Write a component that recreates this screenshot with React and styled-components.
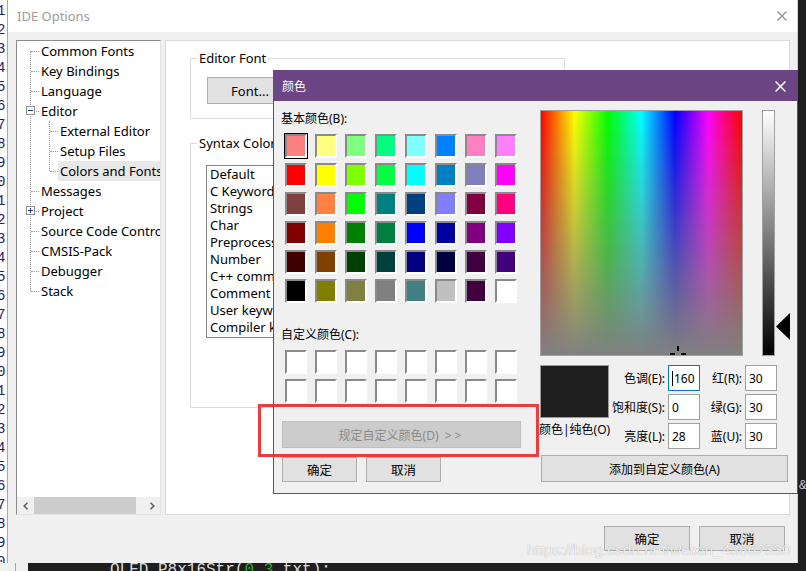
import React from "react";
import styled, { createGlobalStyle } from "styled-components";

const UI_FONT = `"Noto Sans", "Noto Sans CJK SC", sans-serif`;
const MONO = `"Liberation Mono", monospace`;
const PURPLE = "#6b4584";

const BASIC_COLORS = [
  "#ff8080", "#ffff80", "#80ff80", "#00ff80", "#80ffff", "#0080ff", "#ff80c0", "#ff80ff",
  "#ff0000", "#ffff00", "#80ff00", "#00ff40", "#00ffff", "#0080c0", "#8080c0", "#ff00ff",
  "#804040", "#ff8040", "#00ff00", "#008080", "#004080", "#8080ff", "#800040", "#ff0080",
  "#800000", "#ff8000", "#008000", "#008040", "#0000ff", "#0000a0", "#800080", "#8000ff",
  "#400000", "#804000", "#004000", "#004040", "#000080", "#000040", "#400040", "#400080",
  "#000000", "#808000", "#808040", "#808080", "#408080", "#c0c0c0", "#400040", "#ffffff",
];

const TREE = [
  { label: "Common Fonts" },
  { label: "Key Bindings" },
  { label: "Language" },
  {
    label: "Editor",
    expander: "open",
    children: [
      { label: "External Editor" },
      { label: "Setup Files" },
      { label: "Colors and Fonts", selected: true },
    ],
  },
  { label: "Messages" },
  { label: "Project", expander: "closed" },
  { label: "Source Code Control" },
  { label: "CMSIS-Pack" },
  { label: "Debugger" },
  { label: "Stack" },
];

const SYNTAX_ITEMS = [
  "Default",
  "C Keyword",
  "Strings",
  "Char",
  "Preprocessor",
  "Number",
  "C++ comment",
  "Comment",
  "User keyword",
  "Compiler keyword",
];

// current colour in the picker (HSL 0..240 scale like Windows)
const PICK = { hue: 160, sat: 0, lum: 28, r: 30, g: 30, b: 30 };

const GlobalStyle = createGlobalStyle`
  *, *::before, *::after { box-sizing: border-box; }
  html, body { margin: 0; padding: 0; background: #1e1e1e; }
  body { font-family: ${UI_FONT}; }
`;

function CloseGlyph({ size, color, weight }) {
  return (
    <svg width={size} height={size} viewBox="0 0 10 10">
      <path d="M0.5 0.5 L9.5 9.5 M9.5 0.5 L0.5 9.5" stroke={color} strokeWidth={weight} fill="none" />
    </svg>
  );
}

function Chevron({ dir }) {
  const d = dir === "left" ? "M4.5 0.8 L1.2 4 L4.5 7.2" : "M1.5 0.8 L4.8 4 L1.5 7.2";
  return (
    <svg width="6" height="8" viewBox="0 0 6 8">
      <path d={d} stroke="#606060" strokeWidth="1.6" fill="none" />
    </svg>
  );
}

function TreeNode({ node, level = 0 }) {
  return (
    <>
      <Row $level={level}>
        {node.expander && <Expander $plus={node.expander === "closed"} />}
        <RowLabel $selected={node.selected}>{node.label}</RowLabel>
      </Row>
      {node.children && (
        <Children>
          {node.children.map((c) => (
            <TreeNode key={c.label} node={c} level={level + 1} />
          ))}
        </Children>
      )}
    </>
  );
}

export default function App() {
  const lineNumbers = Array.from({ length: 30 }, (_, i) => (i + 1) % 10);
  const arrowTop = Math.round((1 - PICK.lum / 240) * 244) - 13;
  const crossX = (PICK.hue / 239) * 204 - 10;
  const crossY = (1 - PICK.sat / 240) * 243 - 10;

  return (
    <>
      <GlobalStyle />
      <Screen>
        <Gutter>
          {lineNumbers.map((n, i) => (
            <LineNo key={i}>{n}</LineNo>
          ))}
        </Gutter>

        <Window>
          <TitleBar>
            <TitleText>IDE Options</TitleText>
            <CloseGlyph size={10} color="#8a8a8a" weight={1.1} />
          </TitleBar>
          <WindowBody>
            <Panels>
              <TreePanel>
                <TreeBody>
                  <Tree>
                    {TREE.map((n) => (
                      <TreeNode key={n.label} node={n} />
                    ))}
                  </Tree>
                </TreeBody>
                <HScroll>
                  <ScrollArrow>
                    <Chevron dir="left" />
                  </ScrollArrow>
                  <ScrollThumb />
                  <ScrollTrack />
                  <ScrollArrow>
                    <Chevron dir="right" />
                  </ScrollArrow>
                </HScroll>
              </TreePanel>

              <OptionsPanel>
                <GroupBox $height={70}>
                  <Legend>Editor Font</Legend>
                  <GroupContent $pad="10px 0 0 16px">
                    <WinButton $w={86} $h={27} $size={13}>
                      Font...
                    </WinButton>
                  </GroupContent>
                </GroupBox>
                <GroupBox $height={274} $gap={15}>
                  <Legend>Syntax Coloring</Legend>
                  <GroupContent $pad="13px 0 0 15px">
                    <ListBox>
                      {SYNTAX_ITEMS.map((s) => (
                        <ListItem key={s}>{s}</ListItem>
                      ))}
                    </ListBox>
                  </GroupContent>
                </GroupBox>
              </OptionsPanel>
            </Panels>
            <ButtonRow>
              <WinButton $w={86} $h={25} $size={12.5}>
                确定
              </WinButton>
              <WinButton $w={86} $h={25} $size={12.5}>
                取消
              </WinButton>
            </ButtonRow>
          </WindowBody>
        </Window>

        <RightStrip>&amp;</RightStrip>

        <BottomStrip>
          <GutterFoot />
          <CodeLine>
            OLED_P8x16Str(<Num>0</Num>,<Num>3</Num>,txt);
          </CodeLine>
        </BottomStrip>

        <Dialog>
          <DialogTitle>
            <span>颜色</span>
            <CloseGlyph size={11} color="#ffffff" weight={1.4} />
          </DialogTitle>
          <DialogBody>
            <LeftCol>
              <SectionLabel>基本颜色(B):</SectionLabel>
              <SwatchGrid>
                {BASIC_COLORS.map((c, i) => (
                  <Swatch key={i} $color={c} $selected={i === 0} />
                ))}
              </SwatchGrid>
              <SectionLabel $gap={23}>自定义颜色(C):</SectionLabel>
              <SwatchGrid>
                {Array.from({ length: 16 }, (_, i) => (
                  <Swatch key={i} $color="#ffffff" />
                ))}
              </SwatchGrid>
              <DefineButton disabled $w={239} $h={27} $size={12}>
                规定自定义颜色(D) <Spaced>&gt;&gt;</Spaced>
              </DefineButton>
              <OkRow>
                <WinButton $w={75} $h={25} $size={12.5}>
                  确定
                </WinButton>
                <WinButton $w={75} $h={25} $size={12.5}>
                  取消
                </WinButton>
              </OkRow>
            </LeftCol>

            <RightCol>
              <PickerRow>
                <Spectrum>
                  <Crosshair style={{ left: crossX, top: crossY }} width="20" height="20" viewBox="0 0 20 20">
                    <rect x="9" y="2" width="2" height="5" fill="#000" />
                    <rect x="9" y="13" width="2" height="5" fill="#000" />
                    <rect x="2" y="9" width="5" height="2" fill="#000" />
                    <rect x="13" y="9" width="5" height="2" fill="#000" />
                  </Crosshair>
                </Spectrum>
                <LumBar />
                <ArrowSlot>
                  <LumArrow style={{ top: arrowTop }} width="14" height="27" viewBox="0 0 14 27">
                    <polygon points="14,0 14,27 0,13.5" fill="#000" />
                  </LumArrow>
                </ArrowSlot>
              </PickerRow>

              <ValuesRow>
                <PreviewCol>
                  <Preview $color={`rgb(${PICK.r},${PICK.g},${PICK.b})`} />
                  <PreviewLabel>颜色|纯色(O)</PreviewLabel>
                </PreviewCol>
                <FieldGrid>
                  <FieldLabel>色调(E):</FieldLabel>
                  <FieldBox $focused>
                    <Caret />
                    {PICK.hue}
                  </FieldBox>
                  <FieldLabel>红(R):</FieldLabel>
                  <FieldBox>{PICK.r}</FieldBox>

                  <FieldLabel>饱和度(S):</FieldLabel>
                  <FieldBox>{PICK.sat}</FieldBox>
                  <FieldLabel>绿(G):</FieldLabel>
                  <FieldBox>{PICK.g}</FieldBox>

                  <FieldLabel>亮度(L):</FieldLabel>
                  <FieldBox>{PICK.lum}</FieldBox>
                  <FieldLabel>蓝(U):</FieldLabel>
                  <FieldBox>{PICK.b}</FieldBox>
                </FieldGrid>
              </ValuesRow>

              <AddButton $w={247} $h={27} $size={12}>
                添加到自定义颜色(A)
              </AddButton>
            </RightCol>
          </DialogBody>
        </Dialog>

        <Annotation />
        <Watermark>https://blog.csdn.net/weixin_43862330</Watermark>
      </Screen>
    </>
  );
}

const Screen = styled.div`
  position: relative;
  width: 806px;
  height: 571px;
  overflow: hidden;
  display: grid;
  grid-template-columns: 7px 791px 8px;
  grid-template-rows: 563px 8px;
  background: #1e1e1e;
  font-family: ${UI_FONT};
  color: #000;
`;

const Gutter = styled.div`
  background: #ffffff;
  overflow: hidden;
  padding-top: 2px;
`;

const LineNo = styled.div`
  font-family: ${MONO};
  font-size: 14px;
  line-height: 19px;
  margin-left: -3px;
  color: #24205e;
`;

const Window = styled.div`
  display: flex;
  flex-direction: column;
  min-width: 0;
  background: #f0f0f0;
  border-left: 1px solid #a8a8a8;
  border-right: 1px solid #cfcfcf;
`;

const TitleBar = styled.div`
  height: 32px;
  flex: none;
  background: #ffffff;
  display: flex;
  align-items: center;
  justify-content: space-between;
  padding: 0 10px 0 9px;
`;

const TitleText = styled.span`
  font-size: 13px;
  color: #9b9b9b;
`;

const WindowBody = styled.div`
  flex: 1;
  display: flex;
  flex-direction: column;
  padding: 8px 7px 12px 8px;
`;

const Panels = styled.div`
  display: flex;
  gap: 4px;
  height: 475px;
`;

const TreePanel = styled.div`
  width: 145px;
  flex: none;
  background: #ffffff;
  border: 1px solid;
  border-color: #8c8c8c #e3e3e3 #e3e3e3 #8c8c8c;
  display: flex;
  flex-direction: column;
  overflow: hidden;
`;

const TreeBody = styled.div`
  flex: 1;
  overflow: hidden;
`;

const Tree = styled.div`
  position: relative;

  &::before {
    content: "";
    position: absolute;
    left: 13px;
    top: 10px;
    bottom: 10px;
    border-left: 1px dotted #999;
  }
`;

const Children = styled.div`
  position: relative;

  &::before {
    content: "";
    position: absolute;
    left: 32px;
    top: 0;
    bottom: 10px;
    border-left: 1px dotted #999;
  }
`;

const Row = styled.div`
  position: relative;
  height: 20px;
  display: flex;
  align-items: center;
  padding-left: ${(p) => (p.$level ? 41 : 22)}px;
  font-size: 13px;
  white-space: nowrap;

  &::before {
    content: "";
    position: absolute;
    left: ${(p) => (p.$level ? 33 : 14)}px;
    top: 10px;
    width: 8px;
    border-top: 1px dotted #999;
  }
`;

const Expander = styled.span`
  position: absolute;
  left: 9px;
  top: 5px;
  width: 9px;
  height: 9px;
  border: 1px solid #919191;
  background: #ffffff;
  z-index: 1;

  &::before {
    content: "";
    position: absolute;
    left: 1px;
    top: 3px;
    width: 5px;
    height: 1px;
    background: #24407e;
  }

  &::after {
    content: "";
    display: ${(p) => (p.$plus ? "block" : "none")};
    position: absolute;
    left: 3px;
    top: 1px;
    width: 1px;
    height: 5px;
    background: #24407e;
  }
`;

const RowLabel = styled.span`
  flex: 1;
  line-height: 20px;
  padding: 0 2px;
  overflow: hidden;
  background: ${(p) => (p.$selected ? "#e8e8e8" : "transparent")};
`;

const HScroll = styled.div`
  height: 17px;
  flex: none;
  display: flex;
  background: #f0f0f0;
`;

const ScrollArrow = styled.div`
  width: 17px;
  display: flex;
  align-items: center;
  justify-content: center;
`;

const ScrollThumb = styled.div`
  width: 102px;
  background: #cdcdcd;
`;

const ScrollTrack = styled.div`
  flex: 1;
`;

const OptionsPanel = styled.div`
  flex: 1;
  min-width: 0;
  background: #ffffff;
  border: 1px solid #d9d9d9;
  padding: 8px 0 0 24px;
  display: flex;
  flex-direction: column;
  align-items: flex-start;
`;

const GroupBox = styled.fieldset`
  margin: ${(p) => p.$gap || 0}px 0 0;
  width: 375px;
  height: ${(p) => p.$height}px;
  border: 1px solid #dcdcdc;
  padding: 0;
  min-width: 0;
`;

const Legend = styled.legend`
  font-size: 13px;
  line-height: 18px;
  padding: 0 2px;
  margin-left: 6px;
`;

const GroupContent = styled.div`
  padding: ${(p) => p.$pad};
`;

const WinButton = styled.button`
  display: block;
  font-family: ${UI_FONT};
  font-size: ${(p) => p.$size || 12}px;
  width: ${(p) => p.$w}px;
  height: ${(p) => p.$h || 25}px;
  margin: 0;
  padding: 0;
  color: #000;
  background: #e1e1e1;
  border: 1px solid #adadad;
  border-radius: 0;

  &:disabled {
    background: #cccccc;
    border-color: #bfbfbf;
    color: #8a8a8a;
  }
`;

const ListBox = styled.div`
  width: 160px;
  height: 173px;
  border: 1px solid #828790;
  padding: 0 0 0 3px;
  overflow: hidden;
  white-space: nowrap;
  font-size: 13px;
  line-height: 17px;
`;

const ListItem = styled.div``;

const ButtonRow = styled.div`
  margin-top: 11px;
  padding-right: 5px;
  display: flex;
  justify-content: flex-end;
  gap: 9px;
`;

const RightStrip = styled.div`
  background: #1e1e1e;
  color: #cfcfcf;
  font-family: ${MONO};
  font-size: 13px;
  padding: 478px 0 0 1px;
  overflow: hidden;
`;

const BottomStrip = styled.div`
  grid-column: 1 / -1;
  display: flex;
  overflow: hidden;
  background: #1e1e1e;
`;

const GutterFoot = styled.div`
  width: 28px;
  flex: none;
  background: linear-gradient(to right, #f0f0f0 15px, #a8a8a8 15px, #a8a8a8 16px, #f0f0f0 16px);
`;

const CodeLine = styled.div`
  padding-left: 82px;
  margin-top: -2px;
  font-family: ${MONO};
  font-size: 16px;
  line-height: 19px;
  white-space: pre;
  color: #dcdcdc;
`;

const Num = styled.span`
  color: #2fa52f;
`;

const Dialog = styled.div`
  position: absolute;
  left: 273px;
  top: 70px;
  width: 525px;
  height: 424px;
  border: 1px solid ${PURPLE};
  background: #f0f0f0;
  display: flex;
  flex-direction: column;
`;

const DialogTitle = styled.div`
  height: 30px;
  flex: none;
  background: ${PURPLE};
  color: #ffffff;
  font-size: 12px;
  display: flex;
  align-items: center;
  justify-content: space-between;
  padding: 0 11px 0 8px;
`;

const DialogBody = styled.div`
  display: grid;
  grid-template-columns: 240px 250px;
  column-gap: 19px;
  padding: 9px 0 0 7px;
`;

const LeftCol = styled.div`
  display: flex;
  flex-direction: column;
  align-items: flex-start;
`;

const SectionLabel = styled.div`
  font-size: 12px;
  line-height: 18px;
  margin-top: ${(p) => p.$gap || 0}px;
`;

const SwatchGrid = styled.div`
  display: grid;
  grid-template-columns: repeat(8, 22px);
  grid-auto-rows: 24px;
  column-gap: 8px;
  row-gap: 5px;
  margin: 6px 0 0 4px;
`;

const Swatch = styled.div`
  border: 2px solid;
  border-color: #8a8a8a #ffffff #ffffff #8a8a8a;
  background: ${(p) => p.$color};
  outline: ${(p) => (p.$selected ? "1px solid #000" : "none")};
`;

const DefineButton = styled(WinButton)`
  margin: 18px 0 0 1px;
`;

const Spaced = styled.span`
  letter-spacing: 3px;
  margin-left: 3px;
`;

const OkRow = styled.div`
  display: flex;
  gap: 9px;
  margin: 9px 0 0 1px;
`;

const RightCol = styled.div`
  display: flex;
  flex-direction: column;
`;

const PickerRow = styled.div`
  display: flex;
  height: 246px;
`;

const Spectrum = styled.div`
  position: relative;
  width: 206px;
  height: 246px;
  border: 1px solid #a0a0a0;
  overflow: hidden;
  background:
    linear-gradient(to bottom, rgba(128, 128, 128, 0), #808080),
    linear-gradient(
      to right,
      #ff0000 0%,
      #ffff00 16.67%,
      #00ff00 33.33%,
      #00ffff 50%,
      #0000ff 66.67%,
      #ff00ff 83.33%,
      #ff0000 100%
    );
`;

const Crosshair = styled.svg`
  position: absolute;
`;

const LumBar = styled.div`
  width: 13px;
  margin-left: 19px;
  border: 1px solid #a0a0a0;
  background: linear-gradient(to bottom, #ffffff, #000000);
`;

const ArrowSlot = styled.div`
  position: relative;
  width: 14px;
  margin-left: 1px;
`;

const LumArrow = styled.svg`
  position: absolute;
  left: 0;
`;

const ValuesRow = styled.div`
  display: flex;
  margin-top: 9px;
`;

const PreviewCol = styled.div`
  width: 69px;
  flex: none;
`;

const Preview = styled.div`
  height: 53px;
  border: 1px solid #9a9a9a;
  background: ${(p) => p.$color};
`;

const PreviewLabel = styled.div`
  font-size: 12px;
  line-height: 18px;
  margin: 3px 0 0 -1px;
  white-space: nowrap;
`;

const FieldGrid = styled.div`
  display: grid;
  grid-template-columns: 56px 32px 39px 32px;
  grid-auto-rows: 26px;
  column-gap: 3px;
  row-gap: 3px;
  align-items: center;
`;

const FieldLabel = styled.div`
  font-size: 12px;
  text-align: right;
  white-space: nowrap;
`;

const FieldBox = styled.div`
  height: 26px;
  display: flex;
  align-items: center;
  padding-left: 3px;
  background: #ffffff;
  border: 1px solid ${(p) => (p.$focused ? "#0078d7" : "#a0a0a0")};
  font-size: 12px;
`;

const Caret = styled.span`
  display: inline-block;
  width: 1px;
  height: 15px;
  background: #000;
  margin-right: 1px;
`;

const AddButton = styled(WinButton)`
  margin: 6px 0 0 1px;
`;

const Annotation = styled.div`
  position: absolute;
  left: 258px;
  top: 404px;
  width: 281px;
  height: 53px;
  border: 3px solid #ef3b3b;
  pointer-events: none;
`;

const Watermark = styled.div`
  position: absolute;
  left: 527px;
  top: 540px;
  font-family: "Liberation Sans", sans-serif;
  font-size: 15.5px;
  line-height: 20px;
  color: rgba(255, 255, 255, 0.85);
  text-shadow: 0 0 1px rgba(0, 0, 0, 0.35);
  white-space: nowrap;
  pointer-events: none;
`;
